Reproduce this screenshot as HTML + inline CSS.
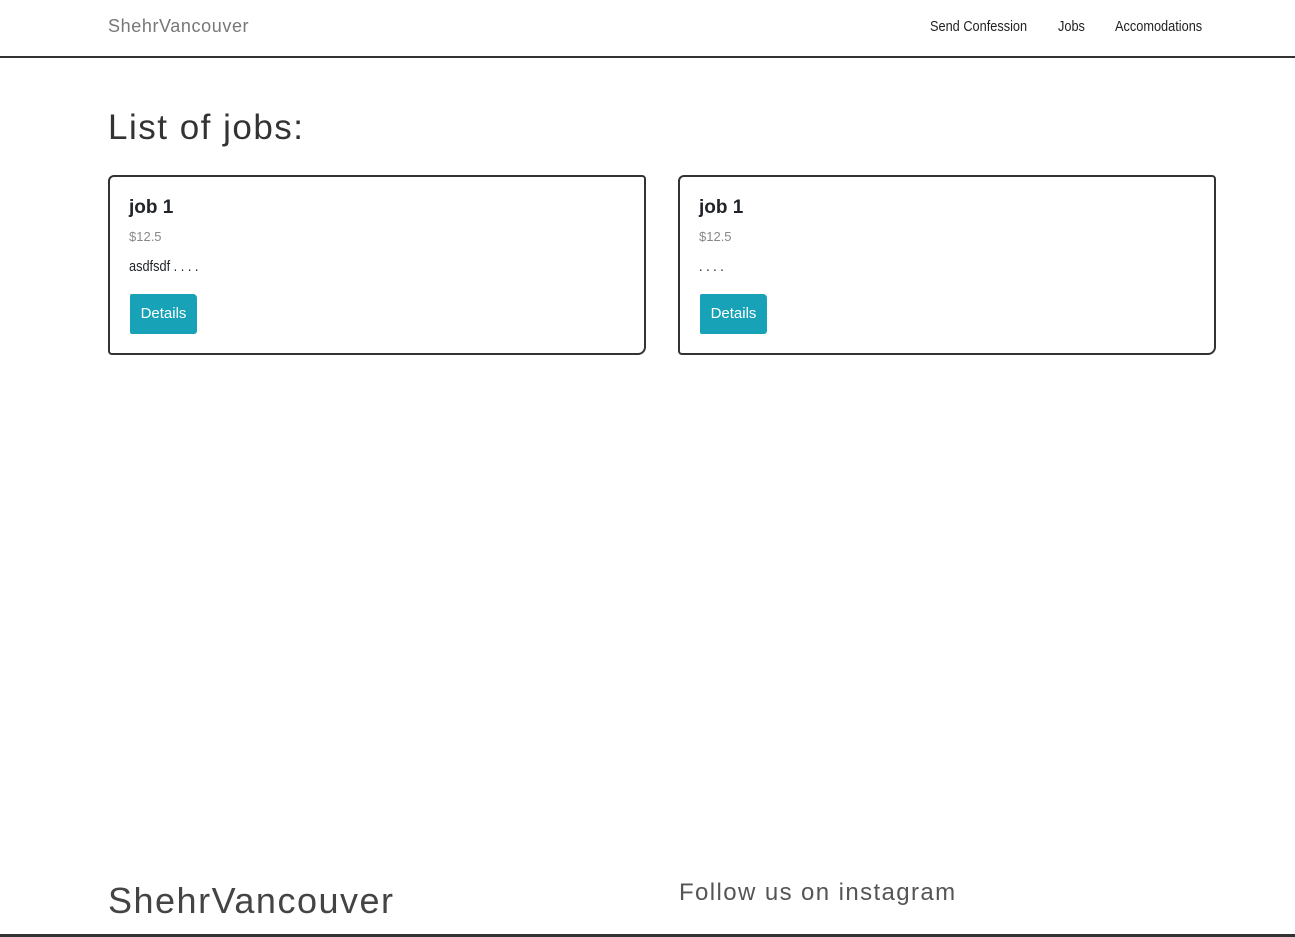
<!DOCTYPE html>
<html><head><style>
body{margin:0;width:1295px;height:937px;position:relative;background:#fff;font-family:"Liberation Sans",sans-serif;color:#212529;overflow:hidden}
.hdr{position:absolute;left:0;top:0;width:1295px;height:56px;border-bottom:2px solid #333}
.brand{position:absolute;left:108px;top:16px;font-size:18px;color:#777;letter-spacing:0.6px}
.nav{position:absolute;top:18px;font-size:15px;color:#222;transform:scaleX(0.85);transform-origin:left}
h1{position:absolute;left:108px;top:108px;margin:0;font-weight:normal;font-size:35px;color:#333;letter-spacing:1.5px}
.card{position:absolute;top:175px;width:534px;height:176px;border:2px solid #333;border-radius:6px 4px 8px 4px}
.card .t{position:absolute;left:19px;top:20px;font-size:19px;font-weight:bold}
.card .p{position:absolute;left:19px;top:52px;font-size:13px;color:#888}
.card .d{position:absolute;left:19px;top:81px;font-size:15px;transform:scaleX(0.85);transform-origin:left}
.card .b{position:absolute;left:20px;top:117px;width:67px;height:40px;background:#17a2b8;color:#fff;font-size:15px;line-height:40px;text-align:center;border-radius:2px 4px 3px 2px}
.f1{position:absolute;left:108px;top:880px;font-size:36px;color:#444;letter-spacing:1.5px}
.f2{position:absolute;left:679px;top:879px;font-size:24px;color:#555;letter-spacing:1.4px}
.bot{position:absolute;left:0;top:934px;width:1295px;height:3px;background:#333}
</style></head><body>
<div class="hdr"></div>
<div class="brand">ShehrVancouver</div>
<div class="nav" style="left:930px">Send Confession</div>
<div class="nav" style="left:1058px">Jobs</div>
<div class="nav" style="left:1115px">Accomodations</div>
<h1>List of jobs:</h1>
<div class="card" style="left:108px"><div class="t">job 1</div><div class="p">$12.5</div><div class="d">asdfsdf . . . .</div><div class="b">Details</div></div>
<div class="card" style="left:678px"><div class="t">job 1</div><div class="p">$12.5</div><div class="d">. . . .</div><div class="b">Details</div></div>
<div class="f1">ShehrVancouver</div>
<div class="f2">Follow us on instagram</div>
<div class="bot"></div>
</body></html>
